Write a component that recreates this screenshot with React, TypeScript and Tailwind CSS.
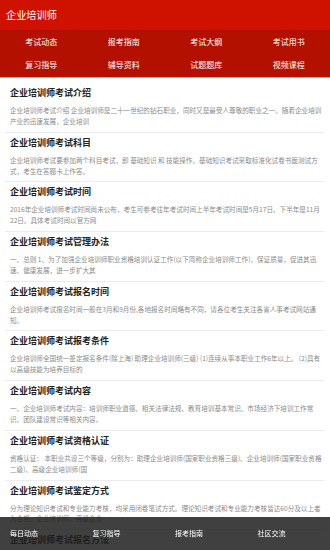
const navItems = ['考试动态', '报考指南', '考试大纲', '考试用书', '复习指导', '辅导资料', '试题题库', '视频课程'];

const footerItems = ['每日动态', '复习指导', '报考指南', '社区交流'];

const articles = [
  {
    title: '企业培训师考试介绍',
    lines: ['企业培训师考试介绍 企业培训师是二十一世纪的钻石职业，同时又是最受人尊敬的职业之一。随着企业培训', '产业的迅速发展，企业培训'],
  },
  {
    title: '企业培训师考试科目',
    lines: ['企业培训师考试要参加两个科目考试，即 基础知识 和 技能操作。基础知识考试采取标准化试卷书面测试方', '式，考生在答题卡上作答。'],
  },
  {
    title: '企业培训师考试时间',
    lines: ['2016年企业培训师考试时间尚未公布，考生可参考往年考试时间上半年考试时间是5月17日、下半年是11月', '22日。具体考试时间以官方网'],
  },
  {
    title: '企业培训师考试管理办法',
    lines: ['一、总则 1、为了加强企业培训师职业资格培训认证工作(以下简称企业培训师工作)，保证质量，促进其迅', '速、健康发展，进一步扩大其'],
  },
  {
    title: '企业培训师考试报名时间',
    lines: ['企业培训师考试报名时间一般在3月和9月份,各地报名时间略有不同，请各位考生关注各省人事考试网站通', '知。'],
  },
  {
    title: '企业培训师考试报考条件',
    lines: ['企业培训师全国统一鉴定报名条件(除上海) 助理企业培训师(三级) (1)连续从事本职业工作6年以上。 (2)具有', '以高级技能为培养目标的'],
  },
  {
    title: '企业培训师考试内容',
    lines: ['一、企业培训师考试内容：培训师职业道德、相关法律法规、教育培训基本常识、市场经济下培训工作常', '识、团队建设常识等相关内容。'],
  },
  {
    title: '企业培训师考试资格认证',
    lines: ['资格认证： 本职业共设三个等级，分别为：助理企业培训师(国家职业资格三级)、企业培训师(国家职业资格', '二级)、高级企业培训师(国'],
  },
  {
    title: '企业培训师考试鉴定方式',
    lines: ['分为理论知识考试和专业能力考核，均采用闭卷笔试方式。理论知识考试和专业能力考核皆达60分及以上者', '为合格。企业培训师、高级企业'],
  },
  {
    title: '企业培训师考试报名方法',
    lines: ['企业培训师考试报名方法：考生可登录当地人事考试网进行网上报名，按要求填写报名信息并上传照片，', '网上报名后需到现场确认'],
  },
];

const App = () => {
  return (
    <div className="min-h-screen bg-white font-['Noto_Sans_CJK_SC','Noto_Sans',sans-serif]">
      <div className="h-[30px] bg-[#cf1200] flex items-center px-[6px]">
        <h1 className="text-[10.2px] text-white leading-none">企业培训师</h1>
      </div>
      <div className="bg-[#b41000] grid grid-cols-4 border-b border-[#e49a92]">
        {navItems.map((item) => (
          <div key={item} className="h-[23.5px] flex items-center justify-center text-[8px] text-white">
            {item}
          </div>
        ))}
      </div>

      <div className="pt-[5px] pb-[40px]">
        {articles.map((a, i) => (
          <div key={a.title}>
            {i > 0 && <div className="h-px bg-[#ececec] mx-[5px]" />}
            <div className="px-[10px] pt-[3px] pb-[5px]">
              <h2 className="text-[9px] leading-[14px] font-bold text-[#222]">{a.title}</h2>
              <div className="mt-[5px] text-[6.6px] leading-[10.85px] text-[#8a8a8a]">
                {a.lines.map((line) => (
                  <p key={line} className="whitespace-nowrap">{line}</p>
                ))}
              </div>
            </div>
          </div>
        ))}
      </div>

      <div className="fixed bottom-0 left-0 right-0 h-[33px] bg-[#1e1e1e]/85 grid grid-cols-4">
        {footerItems.map((item) => (
          <div key={item} className="flex items-center pl-[10px] text-[7px] text-white">
            {item}
          </div>
        ))}
      </div>
    </div>
  );
};

export default App;
